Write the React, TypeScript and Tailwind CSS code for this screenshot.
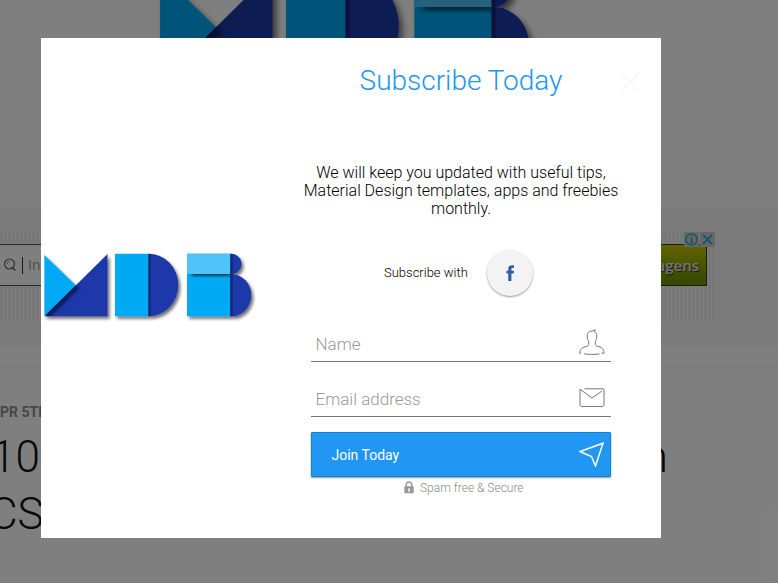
import React from "react";

function Logo({ className, id }: { className: string; id: string }) {
  const clipD = `${id}-d`;
  const clipB = `${id}-b`;
  const clipM = `${id}-m`;
  const clipL = `${id}-l`;
  const blur = `${id}-blur`;
  const drop = `${id}-drop`;
  return (
    <svg viewBox="0 0 220 85" className={className} aria-label="MDB" role="img">
      <defs>
        <filter id={blur} x="-50%" y="-50%" width="200%" height="200%">
          <feGaussianBlur stdDeviation="1.8" />
        </filter>
        <filter id={drop} x="-5%" y="-10%" width="115%" height="130%">
          <feDropShadow dx="2.2" dy="2.6" stdDeviation="1.8" floodColor="#000" floodOpacity="0.55" />
        </filter>
        <clipPath id={clipM}>
          <path d="M66.5 8v62.3H3.5z" />
        </clipPath>
        <clipPath id={clipD}>
          <path d="M107.3 7.7a30 31.3 0 0 1 0 62.6z" />
        </clipPath>
        <clipPath id={clipB}>
          <path d="M189.2 7.7a10.2 10.2 0 0 1 2.2 20.4a20 21.1 0 0 1-2.2 42.2z" />
        </clipPath>
        <clipPath id={clipL}>
          <path d="M146 28h43.2v42.3H146z" />
        </clipPath>
      </defs>
      <g filter={`url(#${drop})`}>
        <path d="M3.4 9L35 39.5L3.4 70.3z" fill="#03a9f4" />
        <path d="M66.5 8v62.3H3.5z" fill="#1c37a9" />
        <path d="M107.3 7.7a30 31.3 0 0 1 0 62.6z" fill="#1c37a9" />
        <path d="M74 7.7h33.3v62.6H74z" fill="#03a9f4" />
        <path d="M189.2 7.7a10.2 10.2 0 0 1 2.2 20.4a20 21.1 0 0 1-2.2 42.2z" fill="#1c37a9" />
        <path d="M146 7.7h43.2v62.6H146z" fill="#03a9f4" />
        <path d="M146 7.7h43.2V28H146z" fill="#4fc3f7" />
      </g>
      <g clipPath={`url(#${clipM})`}>
        <path d="M5 70L36 40" stroke="#06103c" strokeWidth="6" opacity=".75" filter={`url(#${blur})`} />
      </g>
      <g clipPath={`url(#${clipD})`}>
        <path d="M106 0h2.5v80h-2.5z" fill="#06103c" filter={`url(#${blur})`} />
      </g>
      <g clipPath={`url(#${clipB})`}>
        <path d="M188 0h2.5v80H188z" fill="#06103c" filter={`url(#${blur})`} />
      </g>
      <g clipPath={`url(#${clipL})`}>
        <path d="M151 26h42v3.5h-42z" fill="#02202f" filter={`url(#${blur})`} />
      </g>
    </svg>
  );
}

function Page() {
  return (
    <div className="h-[583px] w-[778px] overflow-hidden bg-white">
      <header className="h-[207px] overflow-hidden">
        <Logo id="hero" className="-mt-[43.4px] ml-[154px] h-[151.6px] w-[392.3px]" />
      </header>
      <section className="h-[140px] bg-[#f7f7f7] pt-[25px]">
        <div className="relative h-[90px] w-[715px] bg-[repeating-linear-gradient(90deg,transparent_0_1px,#e4e4e4_1px_2px,transparent_2px_4px)] pt-3">
          <div className="flex h-[42px] w-[707px] items-stretch justify-between">
            <div className="flex flex-1 items-center border-y border-[#555] bg-white pl-[3px]">
              <svg width="14" height="14" viewBox="0 0 14 14" fill="none" stroke="#666">
                <circle cx="6.5" cy="6" r="5" strokeWidth="1.2" />
                <path d="M4 6a2.7 2.7 0 0 1 2.5-2.7" strokeWidth=".7" />
                <path d="M8.5 9l4 3.5" strokeWidth="1.6" />
              </svg>
              <span className="ml-[5px] h-[17px] w-px bg-[#333]" />
              <span className="ml-[5px] font-['Open_Sans'] text-sm text-[#999]">In</span>
            </div>
            <div className="flex w-[120px] items-center justify-end border border-[#2b4a08] bg-gradient-to-b from-[#c4c800] to-[#669000] pr-[7px] font-['Open_Sans'] text-[15px] font-semibold text-[#e8e8e8] [text-shadow:1px_1px_1px_#333]">
              agens
            </div>
          </div>
          <div className="absolute right-0 top-0 flex gap-px">
            <span className="flex size-[15px] items-center justify-center bg-[#ccc]">
              <svg width="13" height="13" viewBox="0 0 13 13" fill="none" stroke="#00aecd" strokeWidth="1.2">
                <circle cx="6.5" cy="6.5" r="5.6" />
                <path d="M5.3 5.5h1.4v4M5.2 9.5h3M6 3.3h1.2" />
              </svg>
            </span>
            <span className="flex size-[15px] items-center justify-center bg-[#ccc]">
              <svg width="11" height="11" viewBox="0 0 11 11" stroke="#00aecd" strokeWidth="1.6">
                <path d="M1 1l9 9M10 1l-9 9" />
              </svg>
            </span>
          </div>
        </div>
      </section>
      <main>
        <div className="h-[19.5px] border-b border-[#eee]" />
        <p className="mt-[36.5px] text-sm leading-[18px] font-bold text-[#8f8f8f]">PR 5TH</p>
        <h1 className="mt-[8px] flex h-[57px] w-[668px] justify-between text-[44px] leading-[57px] font-light text-[#111]">
          <span className="-ml-[9px]">10</span>
          <span>n</span>
        </h1>
        <p className="-ml-[11px] text-[44px] leading-[57px] font-light text-[#111]">CSS</p>
      </main>
    </div>
  );
}

function UserIcon() {
  return (
    <svg width="26" height="26" viewBox="0 0 26 26" fill="none" stroke="#666" strokeWidth=".9">
      <path d="M13 2.2C9.8 1.8 8.2 4 8.2 7c0 3 1 4.4 1.5 5.4v3.2c0 1.2-1.3 1.6-3.6 2.2C3 18.700.9 20 .7 24.300h1M5 24.700c3 .9 12 .9 15.500 .2M22.500 24.200h2.500c-.2-4.300-1.700-5.600-5-6.500-2.200-.6-3.600-1-3.600-2.200v-3.200c.8-1.200 1.400-2.900 1.400-5.300 0-2.300-1-3.900-2.400-4.300L16.200 .7l-3.200 1.500" />
    </svg>
  );
}

function MailIcon() {
  return (
    <svg width="26" height="20" viewBox="0 0 26 20" fill="none" stroke="#666" strokeWidth=".9">
      <path d="M1 1v16.500l1 1h22l1-1V1.500l-1-.7H5.500M1 1.200l12 8.800L23 3" />
    </svg>
  );
}

function Modal() {
  return (
    <div className="flex h-[500px] w-[620px] bg-white">
      <div className="flex w-[240px] shrink-0 items-start pt-[208px]">
        <Logo id="brand" className="h-[85px] w-[220px] shrink-0" />
      </div>
      <div className="relative w-[360px] shrink-0 pt-[24px] text-center">
        <h2 className="text-[28px] leading-[38px] font-light text-[#2196f3]">Subscribe Today</h2>
        <svg className="absolute right-px top-[34px]" width="20" height="20" viewBox="0 0 20 20" stroke="#f8f8f8" strokeWidth="2">
          <path d="M1 1l18 18M19 1L1 19" />
        </svg>
        <p className="mt-[64px] text-base leading-[18px] font-light whitespace-nowrap text-black">
          We will keep you updated with useful tips,
          <br />
          Material Design templates, apps and freebies
          <br />
          monthly.
        </p>
        <div className="mt-[32px] flex h-[46px] items-center pl-[103px]">
          <span className="w-[84px] text-left text-[13px] font-light whitespace-nowrap text-black">Subscribe with</span>
          <span className="ml-[18.5px] flex size-[46px] items-center justify-center rounded-full bg-[#f3f3f3] pl-px shadow-[0_1px_2px_rgba(0,0,0,.4)]">
            <svg width="9" height="16" viewBox="0 0 9 16" fill="#2f5f9f">
              <path d="M2.300 16V8.500H.5V5.700h1.800V4C2.300 1.500 3.600 .2 6 .2c.9 0 1.600 .1 2 .2v2.700H6.700C5.700 3.100 5.400 3.500 5.400 4.300v1.400H8l-.4 2.800H5.400V16z" />
            </svg>
          </span>
        </div>
        <form className="ml-[30px] mt-[27px] w-[300px] text-left text-[17px] font-light text-[#999]">
          <div className="flex h-[39px] items-center justify-between border-b border-[#757575] pr-[6.5px] pl-[4.500px]">
            <span className="pt-1.5">Name</span>
            <UserIcon />
          </div>
          <div className="mt-[16px] flex h-[39px] items-center justify-between border-b border-[#757575] pr-[6.5px] pl-[4.500px]">
            <span className="pt-1.5">Email address</span>
            <span className="pt-[2px]">
              <MailIcon />
            </span>
          </div>
          <button type="button" className="mt-[15px] flex h-[45px] w-full items-center justify-between rounded-[1px] border border-[#0288d1] bg-[#2196f3] pr-[6px] pl-[19.500px] text-sm font-normal text-white shadow-[0_1px_2px_rgba(0,0,0,.4)]">
            <span>Join Today</span>
            <svg width="25" height="25" viewBox="0 0 25 25" fill="none" stroke="white" strokeWidth="1.500">
              <path d="M1 9.500L24 1.200L16.500 24L12.500 14.500z" />
            </svg>
          </button>
          <div className="mt-[3px] flex items-center pl-[93px] text-xs leading-4 text-[#8a8a8a]">
            <svg className="-mt-px" width="10" height="13" viewBox="0 0 10 13">
              <path d="M2.200 6V3.700a2.800 2.800 0 0 1 5.600 0V6" fill="none" stroke="#999" strokeWidth="1.500" />
              <rect x=".3" y="5.300" width="9.400" height="7" rx="1" fill="#999" />
              <path d="M5 7.200v3.500" stroke="white" strokeWidth="1.500" />
            </svg>
            <span className="ml-[6px]">Spam free &amp; Secure</span>
          </div>
        </form>
      </div>
    </div>
  );
}

export default function App() {
  return (
    <div className="relative h-[583px] w-[778px] overflow-hidden font-['Roboto',sans-serif]">
      <Page />
      <div className="absolute inset-0 bg-black/50 pt-[38px] pl-[41px]">
        <Modal />
      </div>
    </div>
  );
}
